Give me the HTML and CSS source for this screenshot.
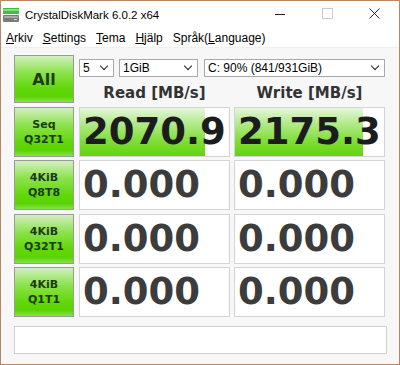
FILE: index.html
```html
<!DOCTYPE html>
<html>
<head>
  <title>CrystalDiskMark 6.0.2 x64</title>
  <link rel="stylesheet" href="styles.css">
</head>
<body>
  <div class="window">
    <!-- Title bar -->
    <div class="titlebar">
      <svg class="app-icon" width="16" height="14" viewBox="0 0 16 14">
        <rect x="0" y="0" width="16" height="6" fill="#3fbf3f"/>
        <rect x="0" y="1" width="16" height="2" fill="#7fe07f"/>
        <rect x="0" y="7" width="16" height="7" rx="1" fill="#7a7a7a"/>
        <rect x="1" y="8" width="14" height="2" fill="#a8a8a8"/>
        <rect x="11" y="11" width="3" height="1" fill="#d8d8d8"/>
      </svg>
      <span class="title">CrystalDiskMark 6.0.2 x64</span>
      <div class="caption-buttons">
        <svg width="12" height="12" viewBox="0 0 12 12"><line x1="0" y1="6.5" x2="10" y2="6.5" stroke="#222" stroke-width="1"/></svg>
        <svg width="12" height="12" viewBox="0 0 12 12"><rect x="0.5" y="0.5" width="10" height="10" fill="none" stroke="#ccc" stroke-width="1"/></svg>
        <svg width="12" height="12" viewBox="0 0 12 12"><path d="M0.5 0.5 L10.5 10.5 M10.5 0.5 L0.5 10.5" stroke="#222" stroke-width="1"/></svg>
      </div>
    </div>

    <!-- Menu bar -->
    <div class="menubar">
      <span><u>A</u>rkiv</span>
      <span><u>S</u>ettings</span>
      <span><u>T</u>ema</span>
      <span><u>H</u>jälp</span>
      <span>Språk(<u>L</u>anguage)</span>
    </div>

    <!-- Main panel -->
    <div class="main">
      <div class="grid">
        <button class="test-btn all">All</button>
        <div class="top-cell">
          <div class="selects">
            <div class="select s-count">5<span class="chev"></span></div>
            <div class="select s-size">1GiB<span class="chev"></span></div>
            <div class="select s-drive">C: 90% (841/931GiB)<span class="chev"></span></div>
          </div>
          <div class="heads">
            <div class="col-head">Read [MB/s]</div>
            <div class="col-head">Write [MB/s]</div>
          </div>
        </div>

        <button class="test-btn">Seq<br>Q32T1</button>
        <div class="result"><div class="meter" style="width: 84%"></div><span class="value dark">2070.9</span></div>
        <div class="result"><div class="meter" style="width: 86%"></div><span class="value dark">2175.3</span></div>

        <button class="test-btn">4KiB<br>Q8T8</button>
        <div class="result"><span class="value">0.000</span></div>
        <div class="result"><span class="value">0.000</span></div>

        <button class="test-btn">4KiB<br>Q32T1</button>
        <div class="result"><span class="value">0.000</span></div>
        <div class="result"><span class="value">0.000</span></div>

        <button class="test-btn">4KiB<br>Q1T1</button>
        <div class="result"><span class="value">0.000</span></div>
        <div class="result"><span class="value">0.000</span></div>
      </div>

      <div class="status"></div>
    </div>
  </div>
</body>
</html>
```

FILE: styles.css
```css
body {
  margin: 0;
  padding: 0;
  font-family: "Liberation Sans", Arial, sans-serif;
  background-color: #fff;
}

.window {
  width: 400px;
  height: 365px;
  box-sizing: border-box;
  border: 1px solid #b88764;
  background-color: #fff;
  display: flex;
  flex-direction: column;
}

.titlebar {
  height: 28px;
  display: flex;
  align-items: center;
  padding-left: 2px;
}

.app-icon {
  margin-right: 6px;
  margin-top: -1px;
}

.title {
  font-size: 11.5px;
  color: #000;
  flex-grow: 1;
}

.caption-buttons {
  display: flex;
  gap: 35px;
  margin-right: 18px;
  margin-top: -3px;
}

.menubar {
  height: 18px;
  display: flex;
  gap: 10px;
  padding-left: 5px;
  font-size: 12px;
  color: #000;
  align-items: center;
  border-bottom: 1px solid #f0f0f0;
}

.main {
  flex-grow: 1;
  background-color: #f7f7f7;
  padding: 7px 12px 0 13px;
}

.grid {
  display: grid;
  grid-template-columns: 61px 151px 151px;
  grid-template-rows: 48px 50px 50px 50px 50px;
  column-gap: 4px;
  row-gap: 3.5px;
}

.grid > .test-btn {
  margin-right: 1px;
}

.test-btn {
  border: 1px solid #9a9a9a;
  background: linear-gradient(to bottom, #d2f0c0 0%, #8ee24e 35%, #62d80a 70%, #5ad400 88%, #86e24c 100%);
  font-family: "DejaVu Sans", sans-serif;
  font-weight: bold;
  font-size: 11px;
  line-height: 15px;
  color: #1d3b12;
  padding: 0;
  cursor: pointer;
}

.test-btn.all {
  font-size: 16px;
}

.top-cell {
  grid-column: 2 / 4;
  display: flex;
  flex-direction: column;
}

.selects {
  display: flex;
  margin-top: 4px;
}

.select {
  height: 18px;
  box-sizing: border-box;
  border: 1px solid #a8a8a8;
  background-color: #fff;
  font-size: 12px;
  line-height: 16px;
  padding-left: 3px;
  display: flex;
  justify-content: space-between;
  align-items: center;
  color: #000;
}

.s-count { width: 35px; margin-right: 5px; }
.s-size { width: 79px; margin-right: 6px; }
.s-drive { width: 181px; }

.chev {
  width: 5px;
  height: 5px;
  border-right: 1.5px solid #222;
  border-bottom: 1.5px solid #222;
  transform: rotate(45deg);
  margin-right: 6px;
  margin-top: -4px;
}

.heads {
  display: grid;
  grid-template-columns: 151px 151px;
  column-gap: 4px;
  margin-top: 7px;
}

.col-head {
  font-family: "DejaVu Sans", sans-serif;
  font-weight: bold;
  font-size: 15px;
  color: #333;
  text-align: center;
  line-height: 18px;
}

.result {
  position: relative;
  border: 1px solid #d4d4d4;
  background-color: #fff;
  overflow: hidden;
  display: flex;
  align-items: center;
}

.meter {
  position: absolute;
  left: 0;
  top: 0;
  bottom: 0;
  background: linear-gradient(to bottom, #e6f7dc 0%, #b5eb90 30%, #7fdd35 70%, #62d40e 100%);
}

.value {
  position: relative;
  font-family: "DejaVu Sans", sans-serif;
  font-weight: bold;
  font-size: 37px;
  color: #3c3c3c;
  padding-left: 3px;
  line-height: 40px;
  white-space: nowrap;
}

.value.dark {
  color: #1c1c1c;
}

.status {
  margin-top: 9px;
  height: 28px;
  box-sizing: border-box;
  border: 1px solid #cfcfcf;
  background-color: #fff;
}
```
